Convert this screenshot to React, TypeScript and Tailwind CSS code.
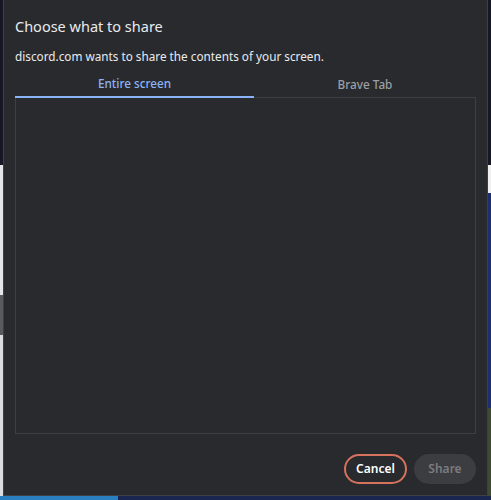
import React from "react";

export default function App() {
  return (
    <div
      className="w-[491px] h-[500px] overflow-hidden bg-[#161826] flex flex-col"
      style={{ fontFamily: '"Noto Sans", "Open Sans", sans-serif' }}
    >
      <div className="flex h-[496px]">
        {/* desktop behind, left edge */}
        <div className="w-[3px] flex flex-col">
          <div className="h-[165px] bg-[#161826]" />
          <div className="h-[130px] bg-[#e4e5e8]" />
          <div className="h-[40px] bg-[#5a5a5c]" />
          <div className="flex-1 bg-[#dcdcde]" />
        </div>

        {/* dialog */}
        <div className="w-[485px] h-[496px] bg-[#292a2d] border-x border-b border-[#3f4044] flex flex-col px-[11px]">
          <div className="pt-[16px] text-[14.5px] leading-[20px] text-[#e8eaed]">
            Choose what to share
          </div>
          <div className="mt-[12px] text-[11.75px] leading-[16px] text-[#e8eaed]">
            discord.com wants to share the contents of your screen.
          </div>
          <div className="mt-[8px] flex border-b border-[#3c4043]">
            <div className="w-[239px] h-[26px] -mb-px flex items-center justify-center text-[11.75px] font-medium text-[#8ab4f8] border-b-2 border-[#8ab4f8]">
              Entire screen
            </div>
            <div className="flex-1 h-[25px] flex items-center justify-center text-[11.75px] font-medium text-[#9aa0a6]">
              Brave Tab
            </div>
          </div>
          <div className="h-[336px] border-x border-b border-[#3c4043]" />
          <div className="mt-[20px] flex justify-end gap-[7px]">
            <button className="w-[63px] h-[30px] rounded-full border-2 border-[#d7725e] text-[12px] font-semibold text-white">
              Cancel
            </button>
            <button className="w-[62px] h-[30px] rounded-full bg-[#3c3d40] text-[12px] font-semibold text-[#7b7c80]">
              Share
            </button>
          </div>
        </div>

        {/* desktop behind, right edge */}
        <div className="w-[3px] flex flex-col">
          <div className="h-[165px] bg-[#161826]" />
          <div className="h-[28px] bg-[#f0f0f0]" />
          <div className="h-[215px] bg-[#1e2f6e]" />
          <div className="flex-1 bg-[#3e4a32]" />
        </div>
      </div>
      <div className="flex h-[4px]">
        <div className="w-[118px] bg-[#2a7fc0]" />
        <div className="flex-1 bg-[#1a2650]" />
      </div>
    </div>
  );
}
